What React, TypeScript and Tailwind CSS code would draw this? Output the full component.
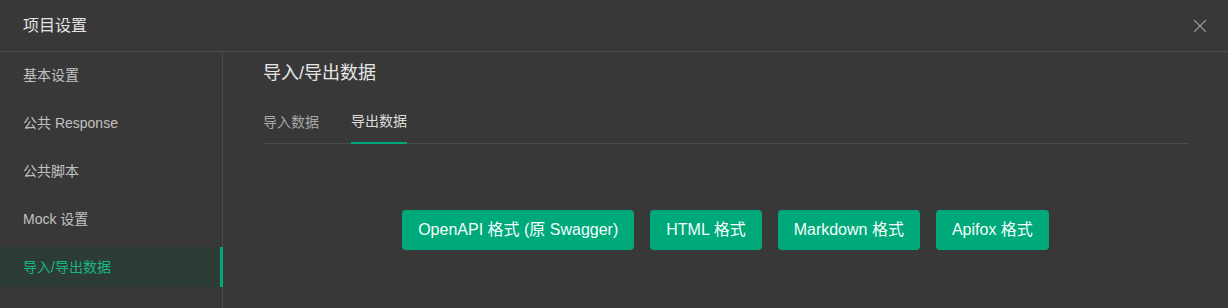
import { X } from 'lucide-react';

const font = { fontFamily: '"Liberation Sans", "Noto Sans CJK SC", sans-serif' };

const menu = ['基本设置', '公共 Response', '公共脚本', 'Mock 设置', '导入/导出数据'];
const formats = ['OpenAPI 格式 (原 Swagger)', 'HTML 格式', 'Markdown 格式', 'Apifox 格式'];

export default function App() {
  return (
    <div className="w-[1228px] h-[308px] bg-[#383838] flex flex-col overflow-hidden" style={font}>
      {/* Header */}
      <div className="h-[52px] shrink-0 flex items-center justify-between pl-[23px] pr-[17px] border-b border-[#4b4b4b]">
        <span className="text-[16px] text-[#e3e3e3]">项目设置</span>
        <X className="w-[22px] h-[22px] text-[#9a9a9a]" strokeWidth={1.2} />
      </div>

      <div className="flex flex-1 min-h-0">
        {/* Sidebar */}
        <div className="w-[223px] shrink-0 border-r border-[#4b4b4b] flex flex-col gap-2 pt-[3px]">
          {menu.map((item, i) => {
            const active = i === menu.length - 1;
            return (
              <div
                key={item}
                className={`h-10 flex items-center pl-[23px] text-[14px] ${
                  active
                    ? 'bg-[#2c3b36] text-[#17b585] border-r-[3px] border-[#00a97a] mr-[-1px]'
                    : 'text-[#c2c2c2]'
                }`}
              >
                {item}
              </div>
            );
          })}
        </div>

        {/* Content */}
        <div className="flex-1 px-10 pt-[8px]">
          <h2 className="text-[18px] text-[#e6e6e6] leading-[26px]">导入/导出数据</h2>
          <div className="mt-[15px] flex gap-8 border-b border-[#4b4b4b] h-[43px]">
            <div className="flex items-center text-[14px] text-[#a8a8a8]">导入数据</div>
            <div className="flex items-center text-[14px] text-[#dcdcdc] border-b-2 border-[#00a97a] mb-[-1px]">导出数据</div>
          </div>
          <div className="mt-[66px] flex justify-center gap-4">
            {formats.map((f) => (
              <button
                key={f}
                className="h-10 px-4 rounded-[4px] bg-[#00a97a] text-[#f4fffb] text-[16px] font-normal"
              >
                {f}
              </button>
            ))}
          </div>
        </div>
      </div>
    </div>
  );
}
